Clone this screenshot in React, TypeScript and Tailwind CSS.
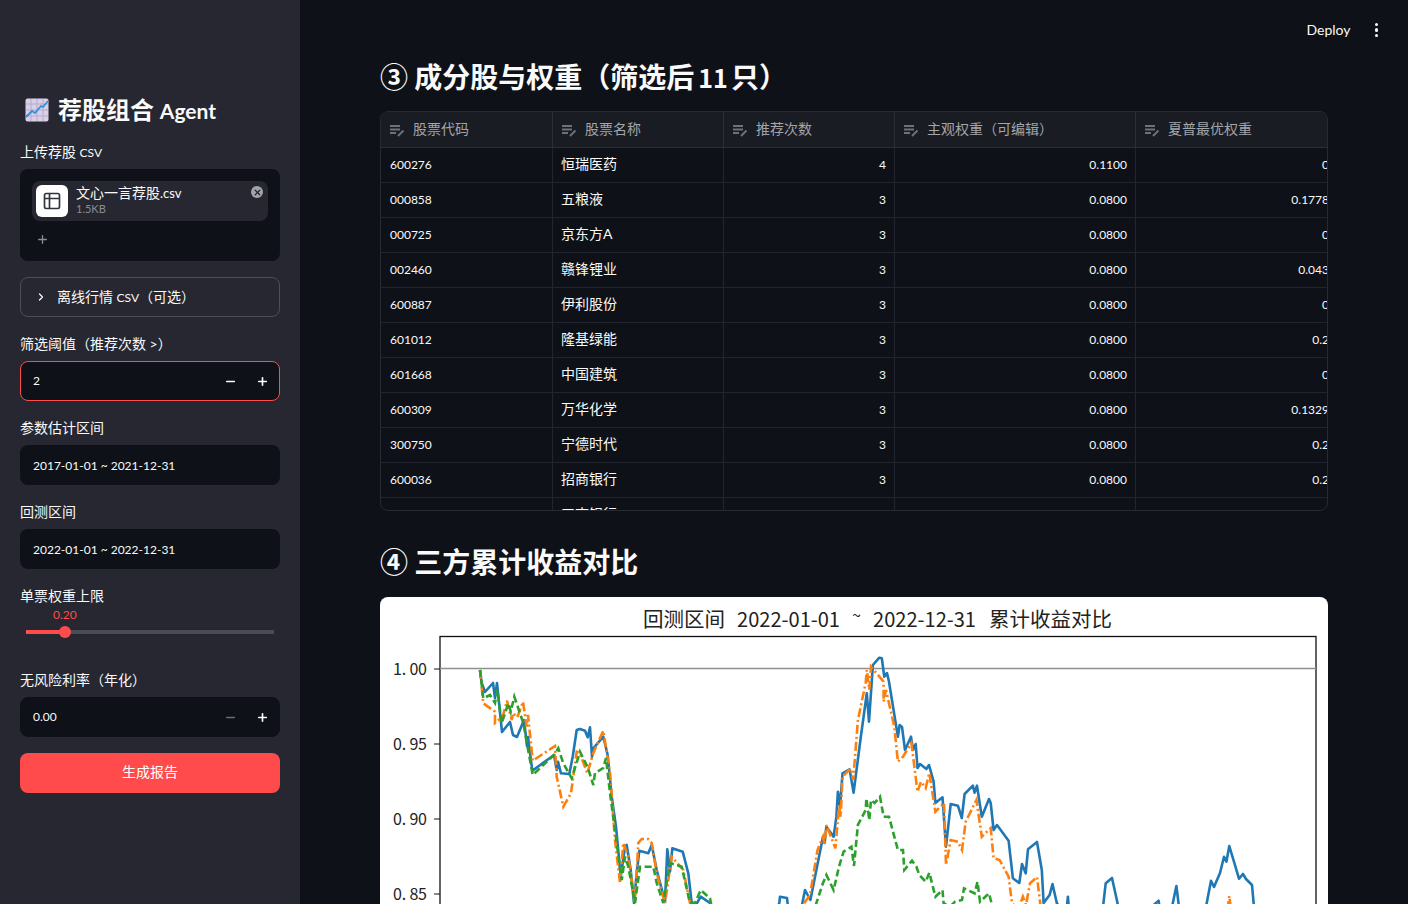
import type { ReactNode } from 'react';
import { ChevronRight, Minus, Plus, Table2, X } from 'lucide-react';

const columns = ['股票代码', '股票名称', '推荐次数', '主观权重（可编辑）', '夏普最优权重'];

const rows = [
  ['600276', '恒瑞医药', '4', '0.1100', '0'],
  ['000858', '五粮液', '3', '0.0800', '0.1778'],
  ['000725', '京东方A', '3', '0.0800', '0'],
  ['002460', '赣锋锂业', '3', '0.0800', '0.043'],
  ['600887', '伊利股份', '3', '0.0800', '0'],
  ['601012', '隆基绿能', '3', '0.0800', '0.2'],
  ['601668', '中国建筑', '3', '0.0800', '0'],
  ['600309', '万华化学', '3', '0.0800', '0.1329'],
  ['300750', '宁德时代', '3', '0.0800', '0.2'],
  ['600036', '招商银行', '3', '0.0800', '0.2'],
  ['601398', '工商银行', '', '', ''],
];

const blue =
  '480,670 481.7,683 485,692 493,683 495,698 497,683 502,732 510,722 513,735 517,737 524,720 527,746 528,737 532.3,770.7 554,755 556.7,770 558,761.7 561,773.3 569.3,774 572.7,756.7 576.7,730 580,729 585,730.7 587.7,737.3 590,727.3 592,756.7 593.3,748.3 603.3,736.7 607.7,755 611.7,796.7 616,826.7 620.7,876.7 625,846.7 626.7,845 630.7,870 634,903 636.7,873 639.3,850.7 648.3,853.3 651.7,845 656.7,870 665,901.7 667.3,849.3 670,871.7 672.3,848.3 682.7,851.7 688.3,873.3 691.7,903 697,903 700.7,896.7 710,903 716,915 775,915 779.3,903 780,896.7 787,898 788,907 802,905 805,890 810.4,900 821,846.7 823,836.7 824.6,843 826.4,826.7 833.6,836.7 836.4,816.7 837.9,791.7 840,806.7 842.5,773.3 849.6,769.3 853.6,792.7 860.4,740 866.8,693.3 869,721.7 872.9,665 879.3,657.7 881.8,658.3 884.3,676.7 887,673 889,681.7 897.9,736.7 899.6,725 902,727 905,750 911,736.7 913,750 915.7,744 917.5,768 920,764 926.4,769 929,765 933.6,781.7 935.4,803 942.5,797.3 946,846.7 950.7,804 957.9,805.7 961.8,818 964.6,794 972.9,785.7 974.6,792.7 977,785.7 981.8,816.7 989,799 990.7,803 993.6,830 997,825 1008.6,840.7 1012.9,878.3 1019.3,883 1022,864 1025.7,873.3 1028,849.3 1037,842 1041.8,870 1043.6,903 1049.6,895 1052.5,884 1056.8,903 1065.7,917 1067.9,896.7 1069,910 1103,907 1105.7,883.3 1112,878 1117.5,903 1119,913 1151.4,907 1158.6,900.7 1160,910 1172,907 1176.4,886 1179,907 1205,912 1211,880.7 1214,887 1220,873 1224,856.7 1226.4,861.7 1229.3,846 1239,878.7 1243,874 1246,879 1252,885 1254,907';

const orange =
  '480,670 483.3,703.3 495,711.7 495,723 502.7,716.7 507,700.7 511.7,720 513,713 517.3,717.3 523,701.7 526.7,726.7 528,715 532.7,760.7 555,746 556.7,776.7 563.3,806.7 571,793.3 576.7,751.7 580,753.3 587.3,773.3 593.3,753 603.3,730.7 610,773 615,840 620,883 623.3,843 628.3,856.7 635,903 638.3,843 641.7,839 648.3,839 651.7,843 656.7,873 665,903 671.7,856.7 683.3,870 690,903 695,915 795,915 801.4,907 810,895 817.5,850 823,836.7 824.6,845 826.4,825 835.4,848.3 839,805 840.7,816.7 842.5,776.7 850.7,768.3 853.2,780 857.9,720 865.7,683 866.8,670 869.3,690 871,666.7 883.6,681.7 883.6,701.7 886,690 894.3,726.7 897.9,761.7 903,756.7 911.4,743 917.5,791.7 921,781.7 925.7,788 929.3,773 935.4,811.7 944,803 946,865 950.7,840 957.9,841.7 962,850 965.7,821.7 976.4,800 981.8,836.7 990.7,828 993.6,858.3 999.6,860 1008.6,876.7 1012,903 1018,910 1022.9,896.7 1026,905 1030,883.3 1037,877 1040.7,907';

const orangeTail = '1227.5,910 1229.3,896 1231,910';

const green =
  '480,670 483.3,698.3 490,695 495,703 497.3,690 501.7,723.3 508.3,703.3 510.7,711.7 514.3,696.7 523.3,723 532.7,775 554,755 558.3,748.3 563.3,763.3 571.7,778.3 580,751.7 588,768 593.3,785 595,773 603.3,768 606,758 610,793 616.7,843 621.7,880 625,856.7 628.3,866.7 635,903 640,866.7 653.3,866.7 656.7,883 663.3,903 670,863 681.7,866.7 690,903 695,903 700.7,890 710,898.3 711.7,907 712,915 810,915 815.7,905 822.9,883.3 826.4,875 833.6,890 839,866.7 843.6,851.7 851.4,846.7 854,866 857.9,825 865.7,810 866.4,798.3 869.3,820 871,800 874.6,803 880,796.7 883.6,816.7 889,816.7 897.9,850 903,850 904.3,870 912,860.7 916.4,866.7 919.3,875 925.7,881.7 929.3,872.7 935.4,896.7 942.5,890 943.6,903 949.6,907 955,901.7 962,900 964,888.3 974.6,893.3 977.5,881.7 980,901.7 989,893.3 992.5,907';

const chartFont = "'Noto Sans CJK SC', sans-serif";

function Label({ children }: { children: ReactNode }) {
  return <div className="h-5 text-sm leading-[22px] text-[#fafafa]">{children}</div>;
}

function NumberInput({ value, active, minusDim }: { value: string; active?: boolean; minusDim?: boolean }) {
  return (
    <div
      className={`mt-2 flex h-10 items-center rounded-lg border bg-[#0e1117] pl-3 pr-[10px] text-xs text-[#fafafa] ${
        active ? 'border-[#ff4b4b]' : 'border-[#0e1117]'
      }`}
    >
      <span className="flex-1">{value}</span>
      <Minus size={13} strokeWidth={3} className={`mr-[19px] ${minusDim ? 'text-[#6b6d74]' : 'text-white'}`} />
      <Plus size={13} strokeWidth={3} className="text-white" />
    </div>
  );
}

function DateInput({ value }: { value: string }) {
  return (
    <div className="mt-2 flex h-10 items-center rounded-lg bg-[#0e1117] px-[13px] pt-[1px] text-xs text-[#fafafa]">
      {value}
    </div>
  );
}

function ColumnIcon() {
  return (
    <svg width="15" height="14" viewBox="0 0 15 14" className="mr-2 mt-[2px] shrink-0 text-[#6f7178]">
      <rect x="0" y="2" width="10" height="2" fill="currentColor" />
      <rect x="0" y="5.5" width="10" height="2" fill="currentColor" />
      <rect x="0" y="9" width="6" height="2" fill="currentColor" />
      <path d="M8 13 L13.5 7.5" stroke="currentColor" strokeWidth="2" />
    </svg>
  );
}

function ChartEmoji() {
  return (
    <svg width="24" height="24" viewBox="0 0 24 24" className="shrink-0">
      <rect x="0.5" y="0.5" width="23" height="23" rx="2" fill="#d9cfe6" />
      <path d="M6 1V23M12 1V23M18 1V23M1 6H23M1 12H23M1 18H23" stroke="#b7aacb" strokeWidth="1" />
      <path d="M1 19 L7 13 L10 15 L16 8 L18 9 L23 3" fill="none" stroke="#2f8fe0" strokeWidth="1.8" />
    </svg>
  );
}

function Sidebar() {
  return (
    <aside className="flex h-full w-[300px] shrink-0 flex-col bg-[#262730] px-5 pt-[94px]">
      <div className="flex h-8 items-center gap-[9px] pb-[1px] pl-[5px] text-2xl font-bold text-[#fafafa]">
        <ChartEmoji />
        <span>
          荐股组合 <span className="text-[21px] leading-none">Agent</span>
        </span>
      </div>
      <div className="mt-[15px]">
        <Label>
          上传荐股 <span className="text-xs">CSV</span>
        </Label>
      </div>
      <div className="mt-[8px] h-[92px] rounded-lg bg-[#0e1117] p-3">
        <div className="relative flex h-10 items-center gap-2 rounded-lg bg-[#262730] px-1">
          <div className="flex h-8 w-8 items-center justify-center rounded-md bg-white">
            <Table2 size={20} className="text-[#31333f]" />
          </div>
          <div className="-mt-[2px] flex flex-col">
            <span className="text-sm leading-[18px] text-[#fafafa]">
              文心一言荐股<span className="text-[13px]">.csv</span>
            </span>
            <span className="text-[11px] leading-[14px] text-[#8b8d93]">1.5KB</span>
          </div>
          <div className="absolute right-[5px] top-[5px] flex h-3 w-3 items-center justify-center rounded-full bg-[#a3a4a8]">
            <X size={9} strokeWidth={3.5} className="text-[#262730]" />
          </div>
        </div>
        <Plus size={13} strokeWidth={2.5} className="ml-[3.5px] mt-[12px] text-[#8b8d93]" />
      </div>
      <div className="mt-4 flex h-10 items-center rounded-lg border border-[#4c4d55] pl-[14px] text-sm text-[#fafafa]">
        <ChevronRight size={12} strokeWidth={2.5} className="mr-[10px]" />
        <span>
          离线行情 <span className="text-xs">CSV</span>（可选）
        </span>
      </div>
      <div className="mt-4">
        <Label>筛选阈值（推荐次数 &gt;）</Label>
        <NumberInput value="2" active />
      </div>
      <div className="mt-4">
        <Label>参数估计区间</Label>
        <DateInput value="2017-01-01 ~ 2021-12-31" />
      </div>
      <div className="mt-4">
        <Label>回测区间</Label>
        <DateInput value="2022-01-01 ~ 2022-12-31" />
      </div>
      <div className="mt-4">
        <Label>单票权重上限</Label>
        <div className="relative mt-2 h-[29px] px-[6px]">
          <span className="absolute left-[33px] top-[-6px] text-xs leading-4 text-[#ff4b4b]">0.20</span>
          <div className="absolute left-[6px] right-[6px] top-[17px] h-1 bg-[#4a4b55]" />
          <div className="absolute left-[6px] top-[17px] h-1 w-[39px] bg-[#ff4b4b]" />
          <div className="absolute left-[39px] top-[13px] h-3 w-3 rounded-full bg-[#ff4b4b]" />
        </div>
      </div>
      <div className="mt-[27px]">
        <Label>无风险利率（年化）</Label>
        <NumberInput value="0.00" minusDim />
      </div>
      <button className="mt-4 h-10 rounded-lg bg-[#ff4b4b] pb-[2px] text-sm text-white">生成报告</button>
    </aside>
  );
}

function WeightTable() {
  return (
    <div className="mt-4 h-[400px] overflow-hidden rounded-lg border border-[#262a33]">
      <div className="grid w-[960px] grid-cols-[172px_171px_171px_241px_205px]">
        {columns.map((c) => (
          <div
            key={c}
            className="flex h-[36px] items-center border-b border-r border-[#2b2e36] bg-[#1a1c24] pb-[2px] pl-[9px] text-sm text-[#a3a5a9]"
          >
            <ColumnIcon />
            {c}
          </div>
        ))}
        {rows.map((r) =>
          r.map((cell, i) => (
            <div
              key={r[0] + i}
              className={`flex h-[35px] items-center overflow-hidden whitespace-nowrap border-b border-r border-[#22252d] px-2 text-[#fafafa] ${
                i === 1 ? 'pb-[3px] text-sm' : 'pl-[9px] text-xs'
              } ${i >= 2 ? 'justify-end' : ''} ${i === 4 ? 'pr-[11px]' : ''}`}
            >
              {cell}
            </div>
          )),
        )}
      </div>
    </div>
  );
}

function ReturnChart() {
  return (
    <div className="mt-[17px] h-[400px] overflow-hidden rounded-t-lg bg-white">
      <svg width="948" height="307" viewBox="380 597 948 307" className="block">
        <g fontSize="20.5" fill="#222" fontFamily={chartFont}>
          <text x="643" y="627">回测区间</text>
          <text x="737" y="627" textLength="103" lengthAdjust="spacingAndGlyphs">2022-01-01</text>
          <text x="852" y="621" fontSize="16">~</text>
          <text x="873" y="627" textLength="103" lengthAdjust="spacingAndGlyphs">2022-12-31</text>
          <text x="989" y="627">累计收益对比</text>
        </g>
        <rect x="440" y="636.5" width="876" height="300" fill="none" stroke="#111" strokeWidth="1.3" />
        <line x1="440" x2="1316" y1="668.5" y2="668.5" stroke="#8f8f8f" strokeWidth="1.3" />
        {[
          ['1. 00', 669],
          ['0. 95', 744],
          ['0. 90', 819],
          ['0. 85', 894],
        ].map(([label, y]) => (
          <g key={label}>
            <line x1="434" x2="440" y1={y} y2={y} stroke="#111" strokeWidth="1" />
            <text x="393" y={Number(y) + 6} textLength="34" fontSize="16" fill="#222" fontFamily={chartFont}>
              {label}
            </text>
          </g>
        ))}
        <polyline points={blue} fill="none" stroke="#1f77b4" strokeWidth="2.6" strokeLinejoin="round" />
        <polyline points={orange} fill="none" stroke="#ff7f0e" strokeWidth="2.6" strokeDasharray="9 3 2 3" />
        <polyline points={orangeTail} fill="none" stroke="#ff7f0e" strokeWidth="2.6" strokeDasharray="9 3 2 3" />
        <polyline points={green} fill="none" stroke="#2ca02c" strokeWidth="2.6" strokeDasharray="7 3.5" />
      </svg>
    </div>
  );
}

export default function App() {
  return (
    <div className="flex h-screen overflow-hidden bg-[#0e1117] font-['Lato','Noto_Sans_CJK_SC',sans-serif]">
      <Sidebar />
      <main className="flex min-w-0 flex-1 flex-col">
        <div className="flex h-[60px] shrink-0 items-center justify-end pr-[30px] text-[#fafafa]">
          <span className="mr-[24px] text-sm">Deploy</span>
          <div className="flex flex-col gap-[2px]">
            <span className="h-[3.5px] w-[3.5px] rounded-full bg-[#fafafa]" />
            <span className="h-[3.5px] w-[3.5px] rounded-full bg-[#fafafa]" />
            <span className="h-[3.5px] w-[3.5px] rounded-full bg-[#fafafa]" />
          </div>
        </div>
        <div className="px-20">
          <h2 className="h-[35px] font-['Noto_Sans_CJK_SC',sans-serif] text-[28px] font-bold leading-[33px] text-[#fafafa]">
            ③ 成分股与权重（筛选后<span className="ml-[4px] mr-[3px] text-[25px] leading-none">11</span>只）
          </h2>
          <WeightTable />
          <h2 className="mt-[34px] h-[35px] font-['Noto_Sans_CJK_SC',sans-serif] text-[28px] font-bold leading-[33px] text-[#fafafa]">
            ④ 三方累计收益对比
          </h2>
          <ReturnChart />
        </div>
      </main>
    </div>
  );
}
